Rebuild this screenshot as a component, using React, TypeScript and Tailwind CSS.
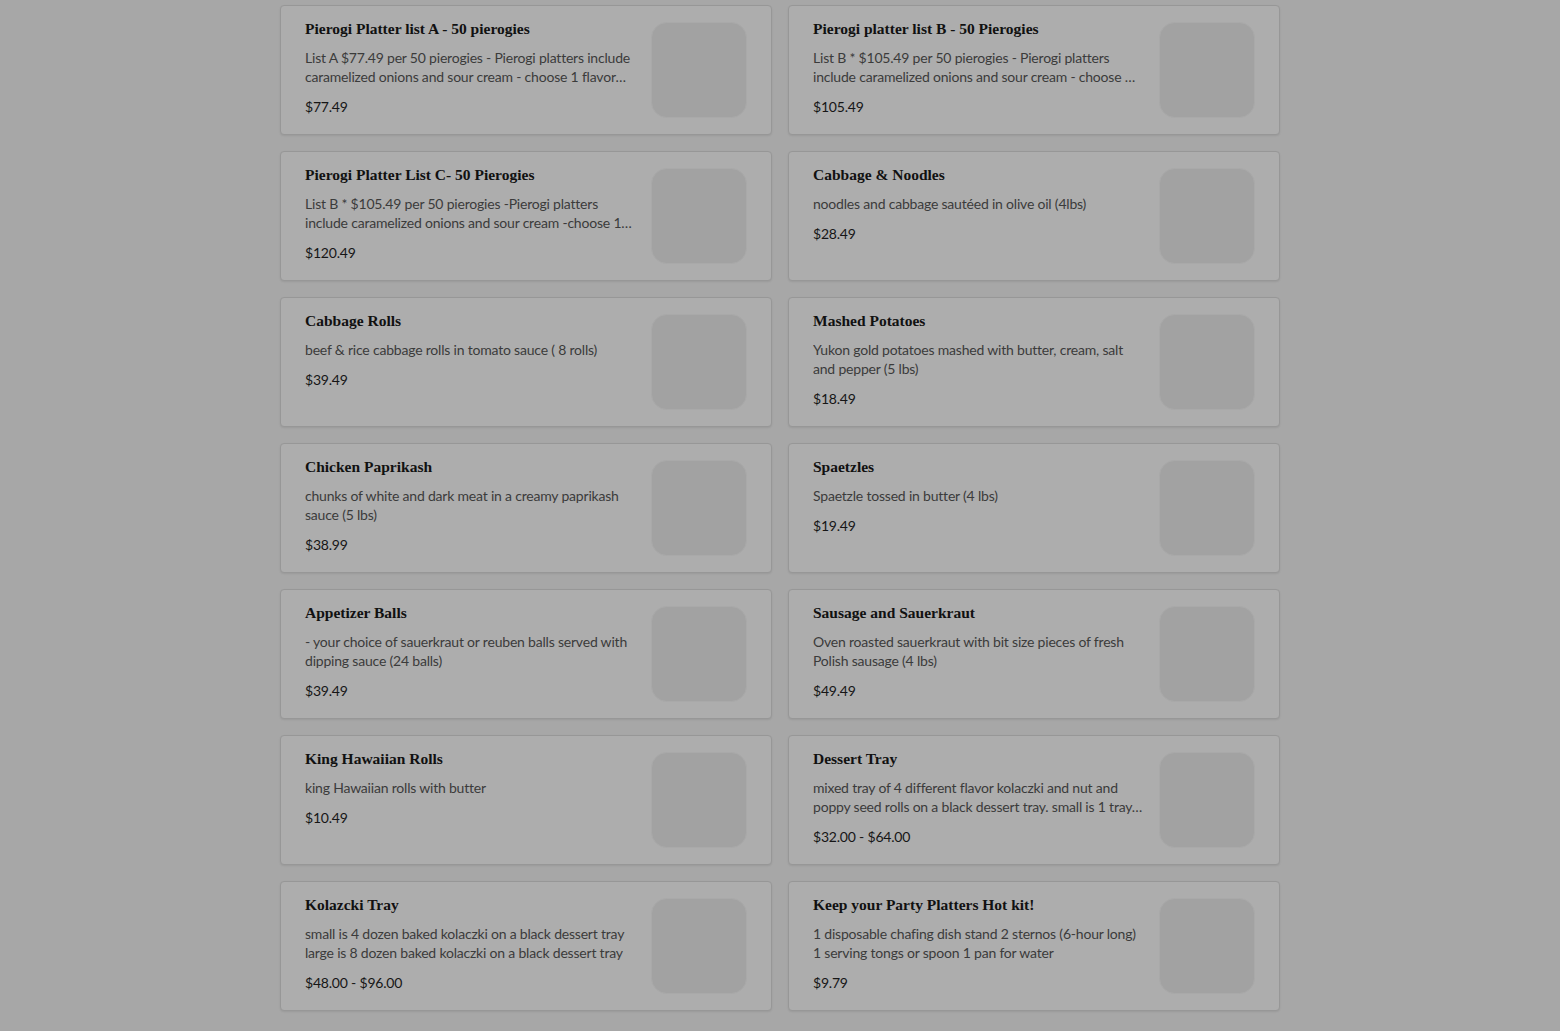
import React from "react";

type Item = {
  title: string;
  description: string;
  price: string;
};

const items: Item[] = [
  {
    title: "Pierogi Platter list A - 50 pierogies",
    description:
      "List A $77.49 per 50 pierogies - Pierogi platters include caramelized onions and sour cream - choose 1 flavor per 50 pierogies",
    price: "$77.49",
  },
  {
    title: "Pierogi platter list B - 50 Pierogies",
    description:
      "List B * $105.49 per 50 pierogies - Pierogi platters include caramelized onions and sour cream - choose 1 flavor per 50 pierogies",
    price: "$105.49",
  },
  {
    title: "Pierogi Platter List C- 50 Pierogies",
    description:
      "List B * $105.49 per 50 pierogies -Pierogi platters include caramelized onions and sour cream -choose 1 flavor per 50 pierogies",
    price: "$120.49",
  },
  {
    title: "Cabbage & Noodles",
    description: "noodles and cabbage sautéed in olive oil (4lbs)",
    price: "$28.49",
  },
  {
    title: "Cabbage Rolls",
    description: "beef & rice cabbage rolls in tomato sauce ( 8 rolls)",
    price: "$39.49",
  },
  {
    title: "Mashed Potatoes",
    description: "Yukon gold potatoes mashed with butter, cream, salt and pepper (5 lbs)",
    price: "$18.49",
  },
  {
    title: "Chicken Paprikash",
    description: "chunks of white and dark meat in a creamy paprikash sauce (5 lbs)",
    price: "$38.99",
  },
  {
    title: "Spaetzles",
    description: "Spaetzle tossed in butter (4 lbs)",
    price: "$19.49",
  },
  {
    title: "Appetizer Balls",
    description: "- your choice of sauerkraut or reuben balls served with dipping sauce (24 balls)",
    price: "$39.49",
  },
  {
    title: "Sausage and Sauerkraut",
    description: "Oven roasted sauerkraut with bit size pieces of fresh Polish sausage (4 lbs)",
    price: "$49.49",
  },
  {
    title: "King Hawaiian Rolls",
    description: "king Hawaiian rolls with butter",
    price: "$10.49",
  },
  {
    title: "Dessert Tray",
    description:
      "mixed tray of 4 different flavor kolaczki and nut and poppy seed rolls on a black dessert tray. small is 1 tray, large is 2 trays",
    price: "$32.00 - $64.00",
  },
  {
    title: "Kolazcki Tray",
    description:
      "small is 4 dozen baked kolaczki on a black dessert tray large is 8 dozen baked kolaczki on a black dessert tray",
    price: "$48.00 - $96.00",
  },
  {
    title: "Keep your Party Platters Hot kit!",
    description:
      "1 disposable chafing dish stand 2 sternos (6-hour long) 1 serving tongs or spoon 1 pan for water",
    price: "$9.79",
  },
];

function MenuCard({ item }: { item: Item }) {
  return (
    <div className="flex gap-4 rounded-[4px] border border-[#979797] bg-[#adadad] px-6 py-4 shadow-[0_1px_2px_rgba(0,0,0,0.08)]">
      <div className="flex min-w-0 flex-1 flex-col">
        <h3 className="mt-[-2px] font-['Liberation_Serif',serif] text-[15.5px] font-bold leading-[18px] text-[#111]">
          {item.title}
        </h3>
        <p className="mt-[10px] line-clamp-2 font-['Lato',sans-serif] text-[14px] leading-[19px] tracking-[-0.2px] text-[#3b3b3b]">
          {item.description}
        </p>
        <span className="mt-[11px] font-['Lato',sans-serif] text-[14px] leading-[19px] tracking-[-0.2px] text-[#161616]">
          {item.price}
        </span>
      </div>
      <div className="h-24 w-24 shrink-0 rounded-2xl border border-[#a9a9a9] bg-[#a2a2a2]" />
    </div>
  );
}

export default function App() {
  return (
    <div className="min-h-screen bg-[#a7a7a7] pt-[5px] pb-6">
      <div className="mx-auto grid w-[1000px] grid-cols-2 gap-4">
        {items.map((item) => (
          <MenuCard key={item.title} item={item} />
        ))}
      </div>
    </div>
  );
}
